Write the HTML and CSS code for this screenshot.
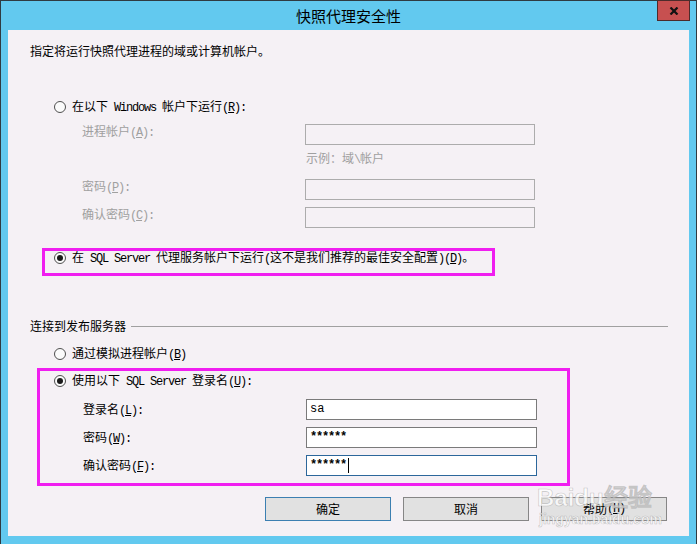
FILE: index.html
```html
<!DOCTYPE html>
<html lang="zh-CN">

<head>
    <meta charset="UTF-8">
    <meta name="viewport" content="width=device-width, initial-scale=1.0">
    <title>快照代理安全性</title>
    <link rel="stylesheet" href="styles.css">
</head>

<body>
    <div class="window">
        <div class="titlebar">
            <div class="title">快照代理安全性</div>
            <div class="close">
                <svg width="10" height="8" viewBox="0 0 10 8">
                    <path d="M1.5 0.5 L8.5 7.5 M8.5 0.5 L1.5 7.5" stroke="#111" stroke-width="2.2" />
                </svg>
            </div>
        </div>

        <div class="dialog">
            <p class="intro">指定将运行快照代理进程的域或计算机帐户。</p>

            <!-- 运行帐户 -->
            <div class="option opt-windows">
                <span class="radio"></span>
                <span>在以下<span class="en"> Windows </span>帐户下运行<span class="en">(<u>R</u>):</span></span>
            </div>
            <div class="fields disabled">
                <div class="row">
                    <label>进程帐户<span class="en">(<u>A</u>):</span></label>
                    <div class="textbox"></div>
                </div>
                <div class="hint">示例：域<span class="en">\</span>帐户</div>
                <div class="row">
                    <label>密码<span class="en">(<u>P</u>):</span></label>
                    <div class="textbox"></div>
                </div>
                <div class="row row-next">
                    <label>确认密码<span class="en">(<u>C</u>):</span></label>
                    <div class="textbox"></div>
                </div>
            </div>

            <div class="option opt-agent marked">
                <span class="radio on"></span>
                <span>在<span class="en"> SQL Server </span>代理服务帐户下运行<span class="en">(</span>这不是我们推荐的最佳安全配置<span class="en">)(<u>D</u>)</span>。</span>
            </div>

            <!-- 连接到发布服务器 -->
            <div class="group-title">连接到发布服务器</div>

            <div class="option opt-impersonate">
                <span class="radio"></span>
                <span>通过模拟进程帐户<span class="en">(<u>B</u>)</span></span>
            </div>

            <div class="login marked">
                <div class="option">
                    <span class="radio on"></span>
                    <span>使用以下<span class="en"> SQL Server </span>登录名<span class="en">(<u>U</u>):</span></span>
                </div>
                <div class="fields login-fields">
                    <div class="row">
                        <label>登录名<span class="en">(<u>L</u>):</span></label>
                        <div class="textbox">sa</div>
                    </div>
                    <div class="row">
                        <label>密码<span class="en">(<u>W</u>):</span></label>
                        <div class="textbox masked">******</div>
                    </div>
                    <div class="row">
                        <label>确认密码<span class="en">(<u>F</u>):</span></label>
                        <div class="textbox masked focus">******<span class="caret"></span></div>
                    </div>
                </div>
            </div>

            <div class="buttons">
                <div class="btn default">确定</div>
                <div class="btn">取消</div>
                <div class="btn">帮助<span class="en">(<u>H</u>)</span></div>
            </div>
        </div>

        <div class="watermark">
            <div class="wm-logo">Baidu经验</div>
            <div class="wm-url">jingyan.baidu.com</div>
        </div>
    </div>
</body>

</html>
```

FILE: styles.css
```css
*,
*::before,
*::after {
    box-sizing: border-box;
}

body {
    margin: 0;
    overflow: hidden;
    background: #62c9ef;
}

/* 窗口外框 */
.window {
    position: relative;
    width: 697px;
    height: 544px;
    display: flex;
    flex-direction: column;
    background: #62c9ef;
    border: 1px solid #2f3b42;
    border-bottom: none;
}

.titlebar {
    height: 29px;
    flex: none;
    display: grid;
    grid-template-columns: 1fr auto 1fr;
}

.title {
    grid-column: 2;
    font: 15px/29px "Noto Sans CJK SC", sans-serif;
    color: #000;
}

.close {
    grid-column: 3;
    justify-self: end;
    width: 33px;
    height: 21px;
    margin: -1px 6px 0 0;
    background: #c75050;
    border: 1px solid #4d2b2b;
    display: flex;
    align-items: center;
    justify-content: center;
}

/* 对话框内容 */
.dialog {
    flex: 1;
    margin: 0 7px 8px;
    padding: 13px 22px 15px;
    background: #f5f1f5;
    display: flex;
    flex-direction: column;
    font-family: "Noto Sans CJK SC", sans-serif;
    font-size: 12px;
    line-height: 16px;
    color: #000;
}

/* 西文部分用等宽字 */
.en {
    font-family: "Liberation Mono", monospace;
    font-size: 12px;
    letter-spacing: -1.2px;
}

.intro {
    margin: 0;
    height: 16px;
}

.option {
    display: flex;
    align-items: center;
    height: 16px;
    padding-left: 24px;
    gap: 6px;
    white-space: nowrap;
}

.radio {
    position: relative;
    flex: none;
    width: 12px;
    height: 12px;
    border: 1px solid #4f4f4f;
    border-radius: 50%;
    background: #fbfbfb;
}

.radio.on::after {
    content: "";
    position: absolute;
    left: 2px;
    top: 2px;
    width: 6px;
    height: 6px;
    border-radius: 50%;
    background: #1a1a1a;
}

.opt-windows {
    margin-top: 40px;
}

.fields {
    margin-left: 52px;
    margin-top: 9px;
}

.fields .row {
    display: flex;
    align-items: flex-start;
}

.fields label {
    flex: none;
    width: 223px;
    line-height: 14px;
}

.textbox {
    width: 230px;
    height: 21px;
    border: 1px solid #acacac;
}

.disabled {
    color: #a0a0a0;
}

.hint {
    margin: 6px 0 14px 224px;
    line-height: 14px;
    height: 14px;
}

.row-next {
    margin-top: 7px;
}

.opt-agent {
    margin-top: 22px;
}

/* 标注框 */
.marked {
    position: relative;
}

.marked::after {
    content: "";
    position: absolute;
    border: 3px solid #f01ef0;
}

.opt-agent::after {
    left: 12px;
    top: -2px;
    width: 453px;
    height: 28px;
}

.group-title {
    display: flex;
    align-items: center;
    height: 16px;
    margin-top: 52px;
    margin-right: -1px;
}

.group-title::after {
    content: "";
    flex: 1;
    height: 1px;
    margin-left: 5px;
    background: #a0a0a0;
}

.opt-impersonate {
    margin-top: 12px;
}

.login {
    margin-top: 11px;
}

.login::after {
    left: 7px;
    top: -5px;
    width: 533px;
    height: 118px;
}

.login-fields {
    margin-left: 53px;
    margin-top: 10px;
}

.login-fields .row {
    align-items: center;
}

.login-fields .row + .row {
    margin-top: 7px;
}

.login-fields .textbox {
    width: 231px;
    padding-left: 3px;
    border-color: #7a7a7a;
    background: #fff;
    font-family: "Liberation Mono", monospace;
    font-size: 12px;
    line-height: 19px;
    display: flex;
    align-items: center;
}

.textbox.masked {
    font-weight: bold;
    letter-spacing: -1.2px;
}

.textbox.focus {
    border-color: #2c679b;
}

.caret {
    width: 1px;
    height: 15px;
    margin-left: 2px;
    background: #000;
}

.buttons {
    margin-top: auto;
    display: flex;
    justify-content: flex-end;
    gap: 12px;
}

.btn {
    width: 126px;
    height: 24px;
    background: #e1e1e1;
    border: 1px solid #868686;
    display: flex;
    align-items: center;
    justify-content: center;
}

.btn.default {
    border-color: #3c7fb1;
}

/* 水印 */
.watermark {
    position: absolute;
    left: 536px;
    top: 483px;
    font-family: "Liberation Sans", sans-serif;
    font-weight: bold;
    color: rgba(255, 255, 255, 0.75);
    -webkit-text-stroke: 0.6px rgba(150, 150, 150, 0.55);
    pointer-events: none;
}

.wm-logo {
    font-size: 24px;
    line-height: 28px;
}

.wm-url {
    font-size: 14px;
    line-height: 14px;
    margin-left: 2px;
}
```
